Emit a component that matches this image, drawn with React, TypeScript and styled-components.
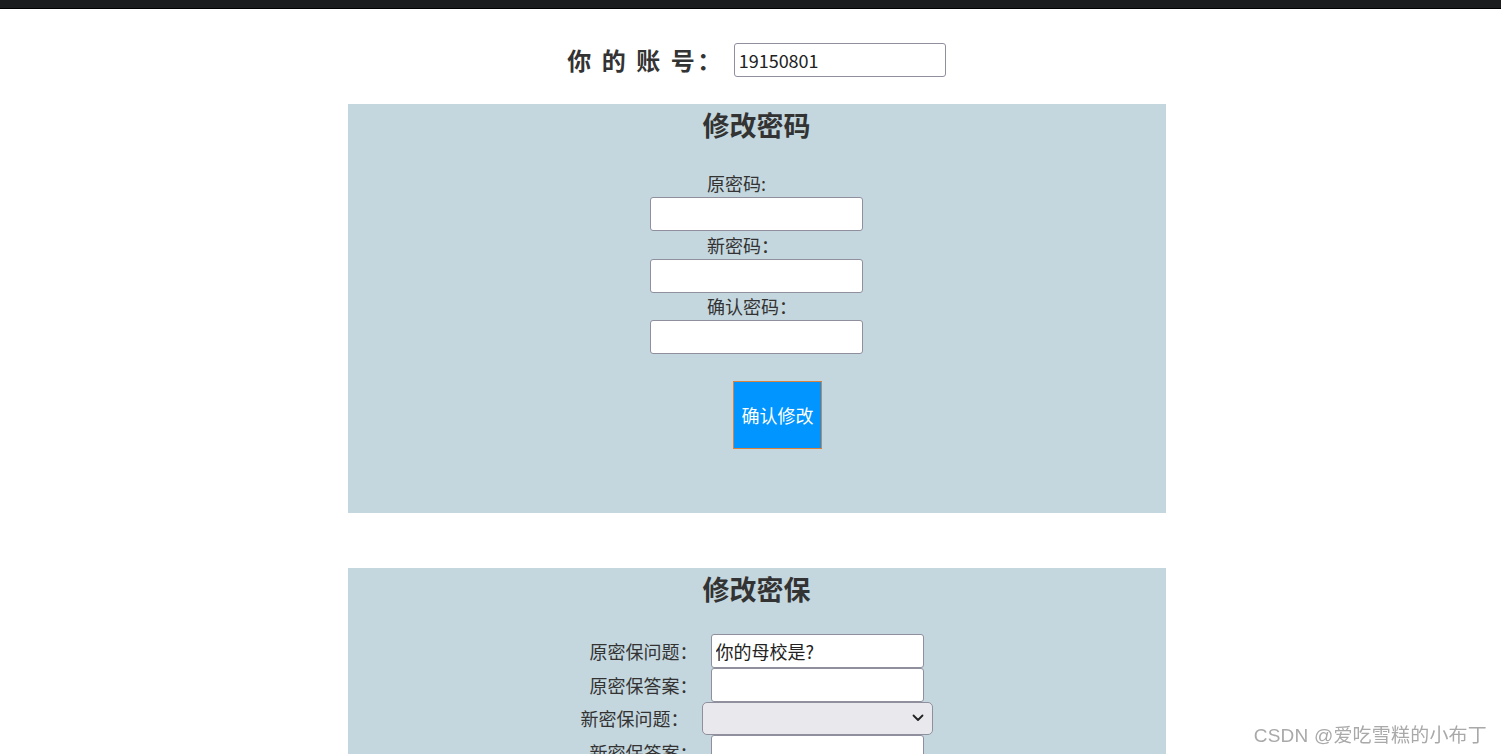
import React from "react";
import styled, { createGlobalStyle } from "styled-components";

const Global = createGlobalStyle`
  html, body { margin: 0; padding: 0; background: #ffffff; }
  body {
    font-family: "Noto Sans CJK SC", "Noto Sans", sans-serif;
    color: #333333;
    overflow: hidden;
  }
  * { box-sizing: border-box; }
`;

const TopBar = styled.div`
  height: 9px;
  background: #1b1c1e;
  border-bottom: 1px solid #000000;
`;

const Page = styled.div`
  padding-left: 12px;
  display: flex;
  flex-direction: column;
  align-items: center;
`;

const AccountRow = styled.div`
  margin-top: 34px;
  display: flex;
  align-items: center;
  gap: 10px;
`;

const AccountLabel = styled.span`
  font-size: 24px;
  font-weight: 700;
  letter-spacing: 2.5px;
  color: #333333;
  line-height: 34px;
`;

const TextInput = styled.input<{ $w?: number }>`
  width: ${(p) => p.$w ?? 213}px;
  height: 34px;
  border: 1px solid #8f8f9d;
  border-radius: 3px;
  background: #ffffff;
  font-family: "Noto Sans CJK SC", "Noto Sans", sans-serif;
  font-size: 18px;
  color: #222222;
  padding: 0 4px;
  margin: 0;
  outline: none;
`;

const Panel = styled.section<{ $mt: number; $pb: number }>`
  width: 818px;
  margin-top: ${(p) => p.$mt}px;
  background: #c5d7de;
  padding: 1px 0 ${(p) => p.$pb}px;
  display: flex;
  flex-direction: column;
  align-items: center;
`;

const Title = styled.h2`
  margin: 0;
  font-size: 27px;
  font-weight: 700;
  line-height: 40px;
  color: #333333;
`;

const Column = styled.div`
  margin-top: 25px;
  width: 213px;
  display: flex;
  flex-direction: column;
`;

const StackLabel = styled.label<{ $h: number }>`
  display: block;
  height: ${(p) => p.$h}px;
  line-height: ${(p) => p.$h}px;
  padding-left: 57px;
  font-size: 18px;
  white-space: nowrap;
  color: #333333;
`;

const SubmitButton = styled.button`
  margin: 27px 0 0 83px;
  width: 89px;
  height: 68px;
  background: #0095ff;
  border: 1px solid #d9823f;
  color: #ffffff;
  font-family: "Noto Sans CJK SC", "Noto Sans", sans-serif;
  font-size: 18px;
  padding: 0;
  cursor: pointer;
`;

const QuestionList = styled.div`
  margin-top: 25px;
  display: flex;
  flex-direction: column;
  align-items: center;
`;

const QuestionRow = styled.div`
  display: flex;
  align-items: center;
  gap: 13px;
`;

const RowLabel = styled.label`
  font-size: 18px;
  line-height: 27px;
  color: #333333;
  white-space: nowrap;
`;

const SelectWrap = styled.div`
  position: relative;
  width: 231px;
  height: 33px;
`;

const Select = styled.select`
  appearance: none;
  width: 100%;
  height: 100%;
  border: 1px solid #8f8f9d;
  border-radius: 5px;
  background: #e9e9ed;
  font-family: "Noto Sans CJK SC", "Noto Sans", sans-serif;
  font-size: 18px;
  padding: 0 24px 0 6px;
  margin: 0;
  outline: none;
`;

const Chevron = styled.svg`
  position: absolute;
  right: 9px;
  top: 12px;
  pointer-events: none;
`;

const Watermark = styled.div`
  position: fixed;
  right: 14px;
  bottom: 6px;
  font-size: 19px;
  line-height: 24px;
  letter-spacing: 0.2px;
  color: #a9a9a9;
  font-family: "Liberation Sans", "Noto Sans CJK SC", sans-serif;
  white-space: nowrap;
`;

export default function App() {
  return (
    <>
      <Global />
      <TopBar />
      <Page>
        <AccountRow>
          <AccountLabel>你 的 账 号：</AccountLabel>
          <TextInput $w={212} defaultValue="19150801" />
        </AccountRow>

        <Panel $mt={27} $pb={64}>
          <Title>修改密码</Title>
          <Column>
            <StackLabel $h={27}>原密码:</StackLabel>
            <TextInput type="password" />
            <StackLabel $h={28}>新密码：</StackLabel>
            <TextInput type="password" />
            <StackLabel $h={27}>确认密码：</StackLabel>
            <TextInput type="password" />
            <SubmitButton>确认修改</SubmitButton>
          </Column>
        </Panel>

        <Panel $mt={55} $pb={40}>
          <Title>修改密保</Title>
          <QuestionList>
            <QuestionRow>
              <RowLabel>原密保问题：</RowLabel>
              <TextInput defaultValue="你的母校是?" />
            </QuestionRow>
            <QuestionRow>
              <RowLabel>原密保答案：</RowLabel>
              <TextInput />
            </QuestionRow>
            <QuestionRow>
              <RowLabel>新密保问题：</RowLabel>
              <SelectWrap>
                <Select defaultValue="">
                  <option value=""></option>
                  <option value="1">你的母校是?</option>
                </Select>
                <Chevron width="12" height="8" viewBox="0 0 12 8">
                  <path d="M1.5 1.5 L6 6 L10.5 1.5" fill="none" stroke="#222" strokeWidth="1.8" strokeLinecap="round" strokeLinejoin="round" />
                </Chevron>
              </SelectWrap>
            </QuestionRow>
            <QuestionRow>
              <RowLabel>新密保答案：</RowLabel>
              <TextInput />
            </QuestionRow>
          </QuestionList>
        </Panel>
      </Page>
      <Watermark>CSDN @爱吃雪糕的小布丁</Watermark>
    </>
  );
}
